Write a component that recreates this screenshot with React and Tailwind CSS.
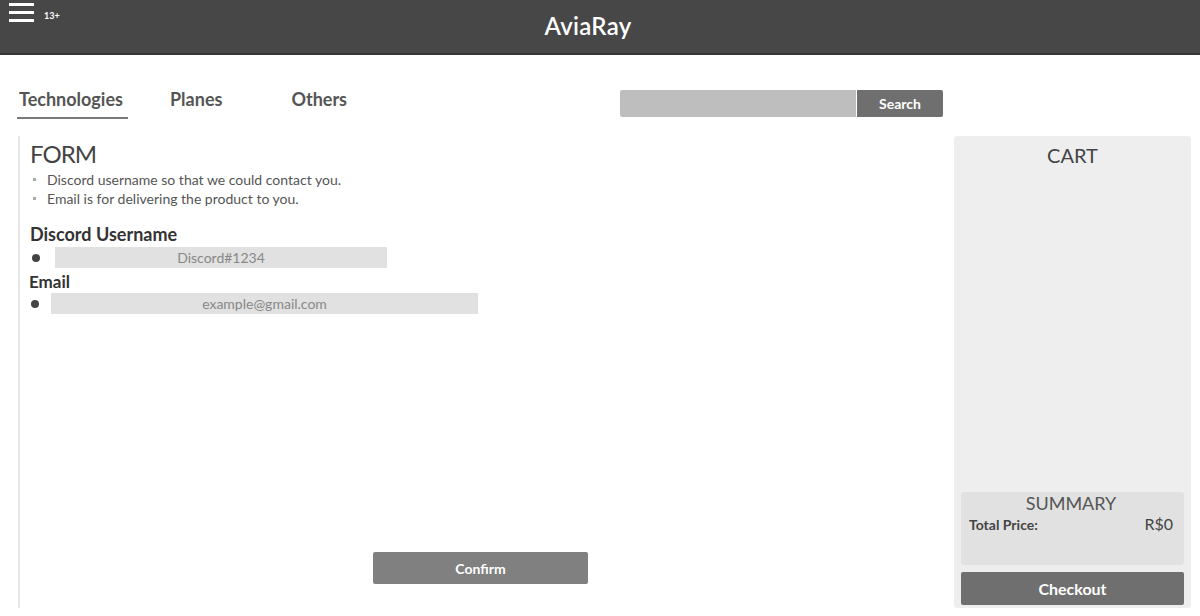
import React from 'react';

const font = { fontFamily: 'Lato, "Open Sans", sans-serif' };

const Tab = ({ label, active, className }) => (
  <div className={`flex flex-col items-start ${className}`}>
    <span className="px-[2px] text-[18px] font-bold text-[#555] leading-[26px]">{label}</span>
    <div className={`mt-[5px] h-[2px] w-full ${active ? 'bg-[#7a7a7a]' : 'bg-transparent'}`} />
  </div>
);

const Field = ({ label, placeholder, width, labelSize, inputOffset, gap }) => (
  <div className="mt-[2px]">
    <p className={`font-bold text-[#333] leading-[22px] ${labelSize}`}>{label}</p>
    <div className={`flex items-center ${gap}`}>
      <span className="ml-[2px] h-[8px] w-[8px] rounded-full bg-[#444]" />
      <div
        className={`h-[21px] bg-[#e1e1e1] text-[14px] text-[#888] flex items-center justify-center ${width} ${inputOffset}`}
      >
        {placeholder}
      </div>
    </div>
  </div>
);

export default function App() {
  return (
    <div className="w-[1200px] h-[616px] bg-white overflow-hidden" style={font}>
      <header className="relative h-[55px] bg-[#474747] border-b-2 border-[#363636] flex items-center justify-center">
        <div className="absolute left-[9px] top-[3px] flex flex-col gap-[5px]">
          <span className="block h-[3px] w-[25px] bg-white" />
          <span className="block h-[3px] w-[25px] bg-white" />
          <span className="block h-[3px] w-[25px] bg-white" />
        </div>
        <span className="absolute left-[44px] top-[9px] text-[9px] font-bold text-white">13+</span>
        <h1 className="mr-[24px] text-[24px] font-semibold text-white tracking-[0.3px] -mt-[2px]">AviaRay</h1>
      </header>

      <div className="flex items-start pt-[31px] pl-[17px]">
        <Tab label="Technologies" active className="w-[111px]" />
        <Tab label="Planes" className="ml-[40px]" />
        <Tab label="Others" className="ml-[65px]" />
        <div className="ml-auto mr-[257px] mt-[4px] flex">
          <div className="h-[27px] w-[236px] bg-[#bebebe] rounded-l-[2px]" />
          <button className="ml-[1px] h-[27px] w-[86px] bg-[#6f6f6f] text-white text-[14px] font-bold rounded-r-[2px]">
            Search
          </button>
        </div>
      </div>

      <div className="flex mt-[17px] pl-[18px] pr-[9px] h-[472px]">
        <section className="flex-1 border-l-2 border-[#e6e6e6] pl-[10px] pt-[4px] flex flex-col">
          <h2 className="text-[24px] text-[#444] leading-[28px] tracking-[-1px]">FORM</h2>
          <ul className="mt-[2px] text-[14px] text-[#555] leading-[19px]">
            <li className="flex items-center">
              <span className="ml-[3px] mr-[11px] h-[3px] w-[3px] bg-[#aaa]" />
              Discord username so that we could contact you.
            </li>
            <li className="flex items-center">
              <span className="ml-[3px] mr-[11px] h-[3px] w-[3px] bg-[#aaa]" />
              Email is for delivering the product to you.
            </li>
          </ul>
          <div className="mt-[13px]">
            <Field label="Discord Username" placeholder="Discord#1234" width="w-[332px]" labelSize="text-[18px]" inputOffset="ml-[15px]" gap="mt-[2px]" />
            <div className="-ml-[1px] mt-[3px]">
              <Field label="Email" placeholder="example@gmail.com" width="w-[427px]" labelSize="text-[17px]" inputOffset="ml-[12px]" gap="mt-0" />
            </div>
          </div>
          <div className="mt-auto mb-[24px] flex">
            <button className="ml-[343px] h-[32px] w-[215px] bg-[#808080] text-white text-[14px] font-bold rounded-[2px]">
              Confirm
            </button>
          </div>
        </section>

        <aside className="w-[237px] bg-[#eeeeee] rounded-[3px] flex flex-col items-center px-[7px] pb-[3px]">
          <h3 className="mt-[7px] text-[20px] text-[#444] leading-[24px]">CART</h3>
          <div className="mt-auto w-full rounded-[3px] bg-[#e1e1e1] h-[73px] pt-0 pl-[8px] pr-[11px]">
            <p className="text-center text-[18px] text-[#555] leading-[22px]">SUMMARY</p>
            <div className="flex justify-between items-center -mt-[2px]">
              <span className="text-[14px] font-bold text-[#444]">Total Price:</span>
              <span className="text-[16px] text-[#444]">R$0</span>
            </div>
          </div>
          <button className="mt-[7px] w-full h-[33px] bg-[#6f6f6f] text-white text-[16px] font-bold rounded-[2px]">
            Checkout
          </button>
        </aside>
      </div>
    </div>
  );
}
